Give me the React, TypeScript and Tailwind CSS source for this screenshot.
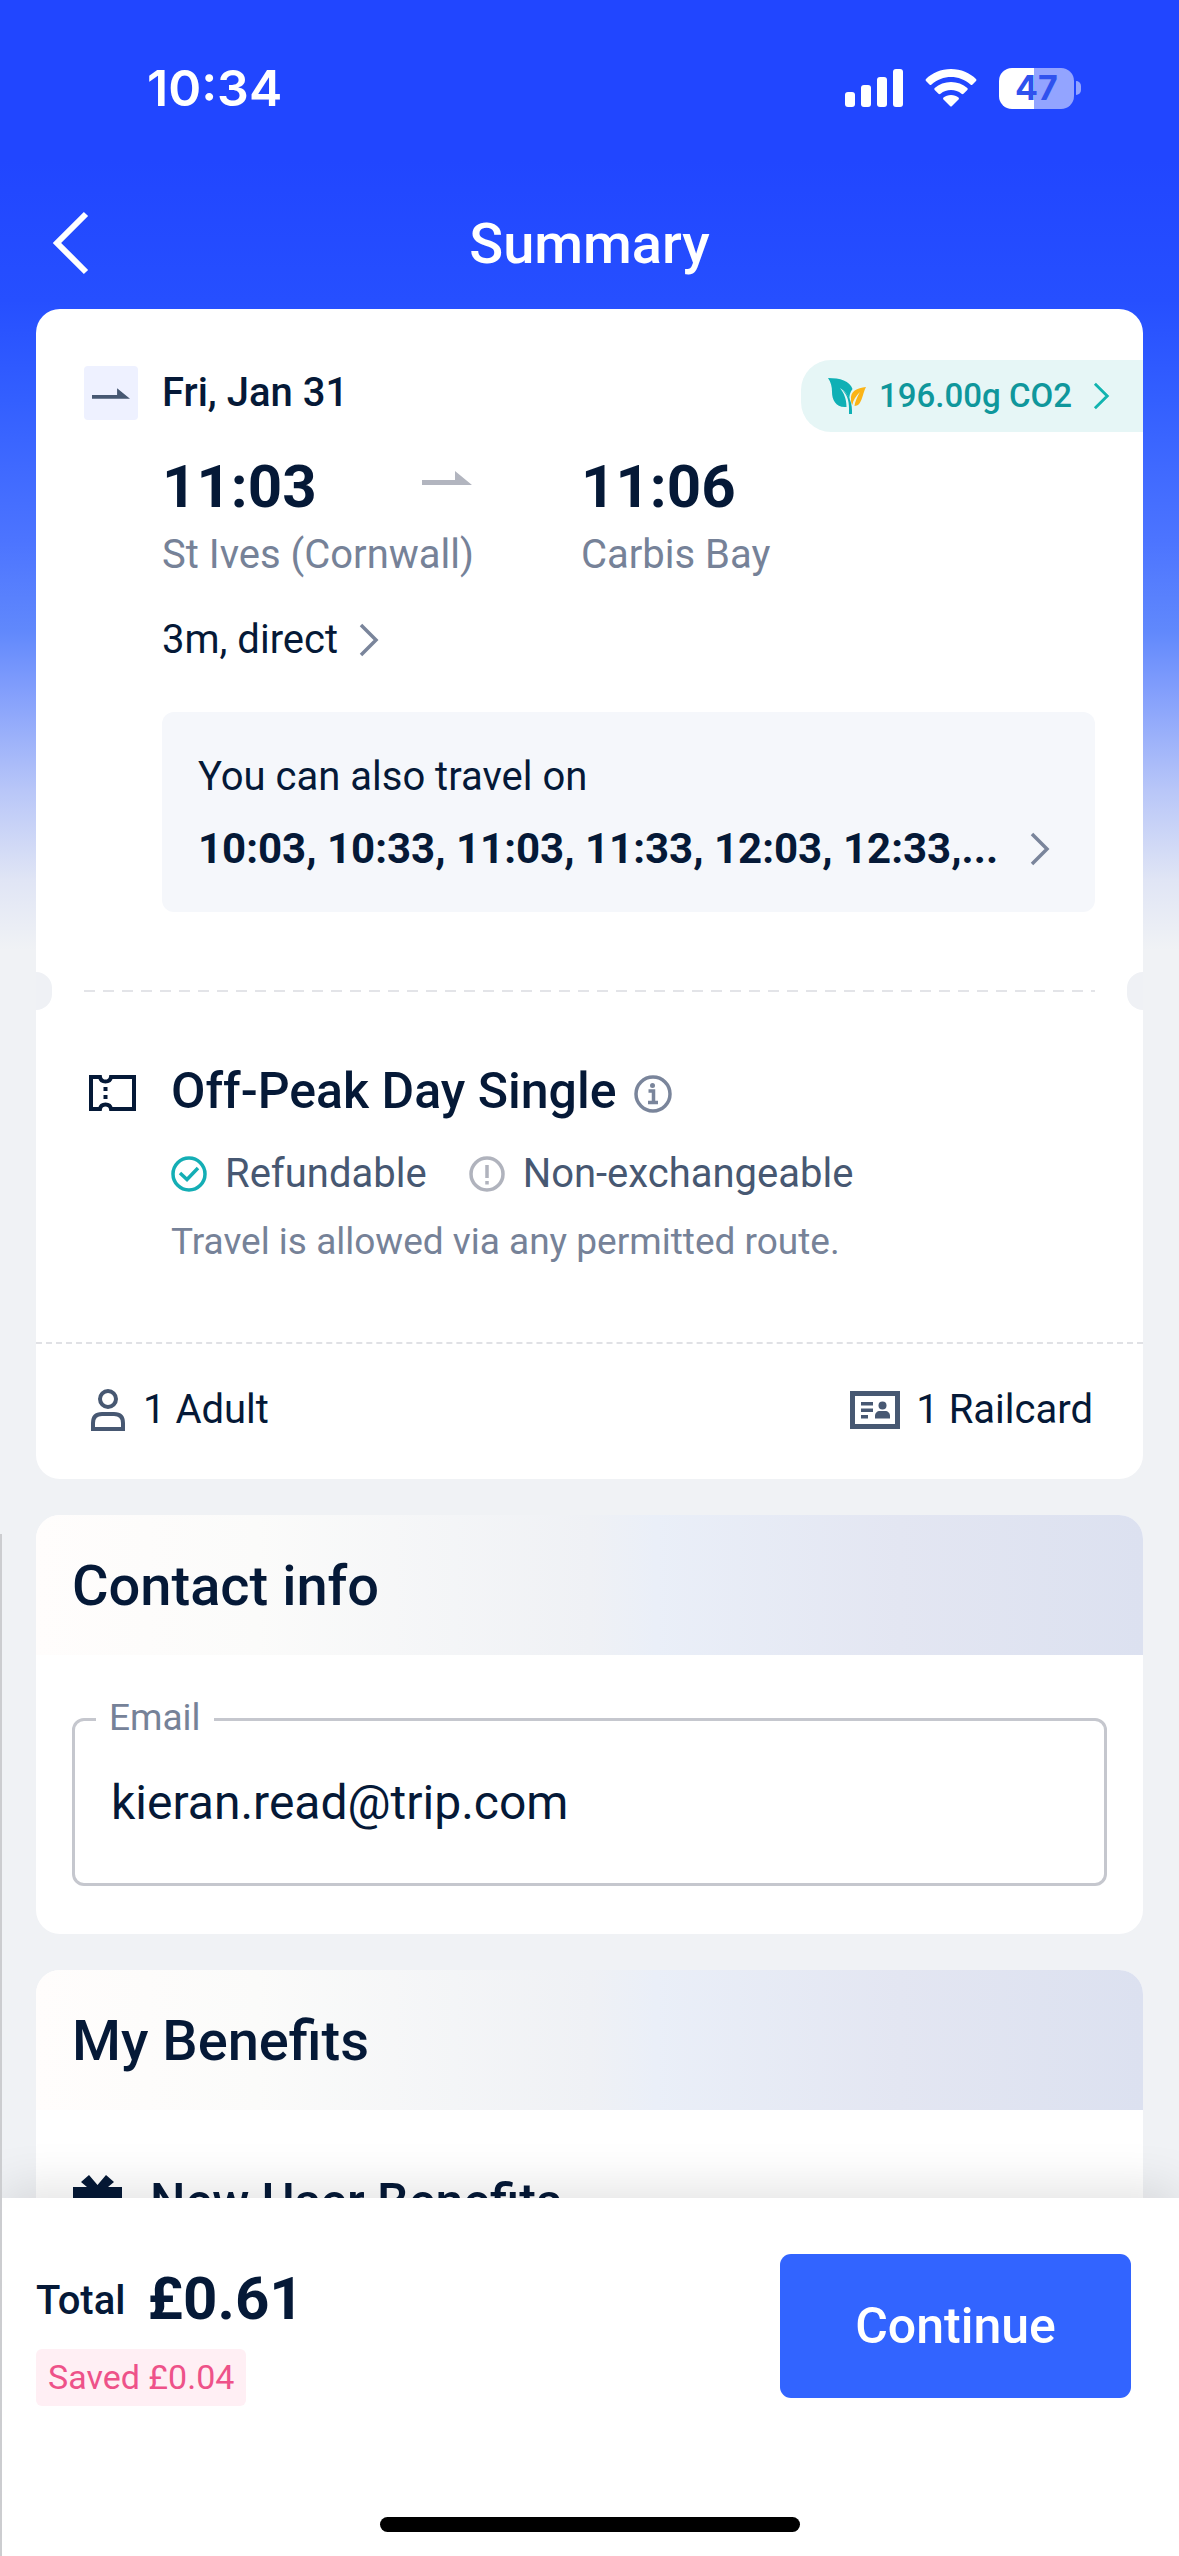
import type { ReactNode } from "react";

const times = ["10:03", "10:33", "11:03", "11:33", "12:03", "12:33"];

function ChevronRight({ className }: { className: string }) {
    return (
        <svg viewBox="0 0 20 34" className={className} fill="none" stroke="currentColor" strokeWidth="3.5">
            <path d="M2 2 L17 17 L2 32" />
        </svg>
    );
}

function HalfArrow({ className }: { className: string }) {
    return (
        <svg viewBox="0 0 50 14" className={className} fill="currentColor">
            <path d="M0 9 H33 V0 L50 14 H0 Z" />
        </svg>
    );
}

function StatusBar() {
    return (
        <div className="flex h-[176px] items-center justify-between pl-[147px] pr-[98px] text-white">
            <span className="font-['Inter',sans-serif] text-[50px] font-semibold leading-[60px]">10:34</span>
            <div className="flex items-center gap-[22px]">
                <svg viewBox="0 0 58 38" className="h-[38px] w-[58px]" fill="currentColor">
                    <rect x="0" y="23" width="10" height="15" rx="3" />
                    <rect x="16" y="16" width="10" height="22" rx="3" />
                    <rect x="32" y="8" width="10" height="30" rx="3" />
                    <rect x="48" y="0" width="10" height="38" rx="3" />
                </svg>
                <svg viewBox="0 0 52 38" className="h-[38px] w-[52px]" fill="currentColor">
                    <path d="M26 0 C36 0 45 4 51 10 Q52 11 51 12 L47.500 15.500 Q46.500 16.500 45.500 15.500 C40 10.500 33 8 26 8 C19 8 12 10.500 6.500 15.500 Q5.500 16.500 4.500 15.500 L1 12 Q0 11 1 10 C7 4 16 0 26 0 Z" />
                    <path d="M26 13 C32 13 38 15 42.300 19 Q43.300 20 42.300 21 L38.500 24.700 Q37.500 25.600 36.500 24.700 C33.500 22.300 30 21 26 21 C22 21 18.500 22.300 15.500 24.700 Q14.500 25.600 13.500 24.700 L9.700 21 Q8.700 20 9.700 19 C14 15 20 13 26 13 Z" />
                    <path d="M26 26 C29 26 31.500 27 33.500 28.600 Q34.500 29.500 33.500 30.500 L27 37 Q26 38 25 37 L18.500 30.500 Q17.500 29.500 18.500 28.600 C20.500 27 23 26 26 26 Z" />
                </svg>
                <div className="flex items-center gap-[2px]">
                    <div className="flex h-[41px] w-[75px] items-center justify-center rounded-[13px] bg-linear-to-r from-white from-47% to-[#93a4ff] to-47% font-['Inter',sans-serif] text-[34px] font-bold leading-[40px] text-[#2f52ee]">
                        47
                    </div>
                    <div className="h-[14px] w-[5px] rounded-r-full bg-[#93a4ff]" />
                </div>
            </div>
        </div>
    );
}

function TitleBar() {
    return (
        <div className="grid h-[133px] grid-cols-[1fr_auto_1fr] items-center text-white">
            <button aria-label="Back" className="ml-[52px] w-[38px]">
                <svg viewBox="0 0 38 64" className="h-[64px] w-[38px]" fill="none" stroke="currentColor" strokeWidth="6">
                    <path d="M34 3 L5 32 L34 61" />
                </svg>
            </button>
            <h1 className="pt-[2px] text-[56px] font-medium leading-[64px]">Summary</h1>
        </div>
    );
}

function Journey() {
    return (
        <div className="pl-[48px] pt-[51px]">
            <div className="flex items-start justify-between">
                <div className="mt-[6px] flex h-[54px] items-center gap-[24px]">
                    <div className="flex h-[54px] w-[54px] items-center justify-center rounded-[4px] bg-[#eef1ff] text-[#475872]">
                        <HalfArrow className="h-[11px] w-[38px]" />
                    </div>
                    <span className="text-[40px] font-medium leading-[52px]">Fri, Jan 31</span>
                </div>
                <button className="flex h-[72px] items-center rounded-l-[30px] bg-[#e6f6f6] pl-[27px] pr-[33px] text-[#0f979c]">
                    <svg viewBox="0 0 38 36" className="h-[36px] w-[38px]">
                        <path d="M0 0 C12 0 22 3 24.500 11 C22 14 21 18 21.500 22 C20 17 17 13 12 10 C16 15 18.500 21 18.500 29 C8 30 4 22 4 14 C4 9 3 4 0 0 Z" fill="#0fb0b5" />
                        <path d="M38 9 C29 10 22 13 23 22 C23 24 23.500 25.500 24.300 27 C25 22 28 18 32 14 C29 19 27 24 26.500 28 C34 28 34 17 38 9 Z" fill="#fbb417" />
                        <path d="M14 12 C20 17 21.500 24 21 36 H24 C24.500 26 22 17 14 12 Z" fill="#0fb0b5" />
                    </svg>
                    <span className="ml-[13px] text-[33px] font-medium leading-[40px]">196.00g CO2</span>
                    <ChevronRight className="ml-[21px] h-[28px] w-[17px] text-[#12b4b0]" />
                </button>
            </div>

            <div className="ml-[78px] mr-[48px]">
                <div className="mt-[17px] grid grid-cols-[312px_1fr] gap-x-[107px]">
                    <div>
                        <div className="flex items-center justify-between text-[60px] font-bold leading-[76px]">
                            11:03
                            <HalfArrow className="mb-[18px] mr-[2px] h-[14px] w-[50px] text-[#b2b5bf]" />
                        </div>
                        <div className="mt-[4px] whitespace-nowrap text-[40px] leading-[52px] text-[#768298]">St Ives (Cornwall)</div>
                    </div>
                    <div>
                        <div className="text-[60px] font-bold leading-[76px]">11:06</div>
                        <div className="mt-[4px] whitespace-nowrap text-[40px] leading-[52px] text-[#768298]">Carbis Bay</div>
                    </div>
                </div>

                <button className="mt-[33px] flex items-center gap-[21px] text-[40px] leading-[52px]">
                    3m, direct
                    <ChevronRight className="h-[34px] w-[20px] text-[#7a859b]" />
                </button>

                <button className="mt-[46px] block w-full rounded-[12px] bg-[#f5f7fb] pb-[35px] pl-[36px] pr-[45px] pt-[39px] text-left">
                    <span className="block text-[40px] leading-[52px]">You can also travel on</span>
                    <span className="mt-[18px] flex items-center justify-between text-[42px] font-bold leading-[56px]">
                        <span className="whitespace-nowrap">{times.join(", ")},...</span>
                        <ChevronRight className="h-[34px] w-[20px] shrink-0 text-[#7a859b]" />
                    </span>
                </button>
            </div>
        </div>
    );
}

// Tear line between the journey and the ticket, with a notch on both edges
function TearLine() {
    return (
        <div className="mt-[59px] flex h-[40px] items-center justify-between overflow-hidden">
            <div className="h-[38px] w-[16px] rounded-r-full bg-[#eff1f5]" />
            <div className="mx-[32px] h-[2px] flex-1 bg-[repeating-linear-gradient(90deg,#e3e4e8_0_11px,transparent_11px_19px)]" />
            <div className="h-[38px] w-[16px] rounded-l-full bg-[#eff1f5]" />
        </div>
    );
}

function Ticket() {
    return (
        <div className="flex gap-[35px] px-[53px] pb-[76px] pt-[48px]">
            <svg viewBox="0 0 47 36" className="mt-[16px] h-[36px] w-[47px] shrink-0" fill="none" stroke="currentColor" strokeWidth="4">
                <path d="M2 2 H11 C12 8 21 8 22 2 H45 V34 H22 C21 28 12 28 11 34 H2 Z" />
                <path d="M16.500 12 V16 M16.500 20 V24" />
            </svg>
            <div>
                <div className="flex items-center gap-[18px]">
                    <h2 className="text-[50px] font-medium leading-[64px]">Off-Peak Day Single</h2>
                    <button aria-label="Ticket details" className="mt-[6px]">
                        <svg viewBox="0 0 38 38" className="h-[38px] w-[38px]" fill="none" stroke="#7a859b" strokeWidth="3.500">
                            <circle cx="19" cy="19" r="17" />
                            <path d="M14.500 16 H19.500 V27 M14 27.500 H24" />
                            <circle cx="18.500" cy="10.500" r="2.500" fill="#7a859b" stroke="none" />
                        </svg>
                    </button>
                </div>
                <div className="mt-[25px] flex items-center text-[40px] leading-[52px] text-[#475872]">
                    <svg viewBox="0 0 36 36" className="h-[36px] w-[36px]" fill="none" stroke="#14aeb5" strokeWidth="3.500">
                        <circle cx="18" cy="18" r="16" />
                        <path d="M9 17 L16 23.500 L27 12" />
                    </svg>
                    <span className="ml-[18px]">Refundable</span>
                    <svg viewBox="0 0 36 36" className="ml-[42px] h-[36px] w-[36px]" fill="none" stroke="#b0b3bd" strokeWidth="3.500">
                        <circle cx="18" cy="18" r="16" />
                        <path d="M18 9 V22 M18 25 V28.500" />
                    </svg>
                    <span className="ml-[18px]">Non-exchangeable</span>
                </div>
                <p className="mt-[18px] text-[37px] leading-[48px] text-[#768298]">Travel is allowed via any permitted route.</p>
            </div>
        </div>
    );
}

function Passengers() {
    return (
        <div className="border-t-2 border-dashed border-[#e0e1e5] pb-[4px]">
            <div className="flex h-[131px] items-center justify-between px-[50px] text-[40px] leading-[52px]">
                <div className="flex items-center gap-[18px] pl-[5px]">
                    <svg viewBox="0 0 34 42" className="h-[42px] w-[34px]" fill="none" stroke="#475872" strokeWidth="4">
                        <ellipse cx="17" cy="10" rx="8" ry="8" />
                        <path d="M2 40 V34 C2 28 5 25 11 25 H23 C29 25 32 28 32 34 V40 Z" />
                    </svg>
                    <span>1 Adult</span>
                </div>
                <div className="flex items-center gap-[16px]">
                    <svg viewBox="0 0 50 38" className="h-[38px] w-[50px]" fill="#475872">
                        <path fillRule="evenodd" d="M0 0 H50 V38 H0 Z M5 5 V33 H45 V5 Z" />
                        <path d="M11 11 H23 V14.500 H11 Z M11 17.500 H23 V21 H11 Z M11 24 H18 V27.500 H11 Z" />
                        <circle cx="32.500" cy="14.500" r="4" />
                        <path d="M25 27.500 V25 C25 22 27 20 30 20 H35 C38 20 40 22 40 25 V27.500 Z" />
                    </svg>
                    <span>1 Railcard</span>
                </div>
            </div>
        </div>
    );
}

function Section({ title, children }: { title: string; children: ReactNode }) {
    return (
        <section className="mt-[36px] overflow-hidden rounded-[24px] bg-white">
            <h2 className="bg-[linear-gradient(90deg,#fffdfc,#fbfbfa_20%,#eff1f5_50%,#eaeff8_56%,#e3e6f2_78%,#dce1f0)] px-[36px] pt-[2px] text-[56px] font-medium leading-[138px]">
                {title}
            </h2>
            {children}
        </section>
    );
}

function BottomBar() {
    return (
        <footer className="relative bg-white pb-[24px] pt-[56px] shadow-[0_-8px_48px_rgba(0,0,0,0.12)]">
            <div className="flex items-start justify-between pl-[36px] pr-[48px]">
                <div className="flex flex-col items-start pt-[5px]">
                    <div className="flex items-center gap-[22px] leading-[76px]">
                        <span className="pt-[4px] text-[40px] font-medium">Total</span>
                        <span className="text-[60px] font-bold">£0.61</span>
                    </div>
                    <span className="mt-[10px] rounded-[6px] bg-[#ffeff4] px-[12px] text-[34px] leading-[57px] text-[#ee5289]">
                        Saved £0.04
                    </span>
                </div>
                <button className="h-[144px] w-[351px] rounded-[11px] bg-[#3264ff] text-[50px] font-medium text-white">
                    Continue
                </button>
            </div>
            <div className="mx-auto mt-[111px] h-[15px] w-[420px] rounded-full bg-black" />
        </footer>
    );
}

export default function App() {
    return (
        <div className="relative flex h-screen flex-col overflow-hidden bg-[#f0f2f6] bg-[linear-gradient(180deg,#2146ff_160px,#264fff_300px,#335fff_400px,#4c74ff_540px,#6088fc_630px,#7f9cfc_685px,#b8c6f8_790px,#e0e5f5_880px,#f0f2f5_950px)] font-['Roboto',sans-serif] text-[#051937]">
            <StatusBar />
            <TitleBar />
            <main className="min-h-0 flex-1 overflow-hidden px-[36px]">
                <section className="overflow-hidden rounded-[24px] bg-white">
                    <Journey />
                    <TearLine />
                    <Ticket />
                    <Passengers />
                </section>

                <Section title="Contact info">
                    <div className="px-[36px] pb-[48px] pt-[63px]">
                        <div className="relative">
                            <label htmlFor="email" className="absolute -top-[24px] left-[24px] bg-white px-[13px] text-[37px] leading-[48px] text-[#768298]">
                                Email
                            </label>
                            <input
                                id="email"
                                type="email"
                                defaultValue="kieran.read@trip.com"
                                className="h-[168px] w-full rounded-[12px] border-3 border-[#c5c7ce] px-[36px] text-[48px] leading-[64px]"
                            />
                        </div>
                    </div>
                </Section>

                <Section title="My Benefits">
                    <div className="flex items-center gap-[28px] px-[37px] pb-[60px] pt-[60px]">
                        <svg viewBox="0 0 49 54" className="h-[54px] w-[49px]" fill="currentColor">
                            <path d="M0 12 H14 L8 7 L16 0 L24.500 10 L33 0 L41 7 L35 12 H49 V26 H0 Z M4 30 H22 V54 H4 Z M27 30 H45 V54 H27 Z" />
                        </svg>
                        <span className="text-[50px] font-medium leading-[64px]">New User Benefits</span>
                    </div>
                </Section>
            </main>
            <BottomBar />
            <div className="absolute bottom-0 left-0 top-[60%] w-[2px] bg-[#cccdd0]" />
        </div>
    );
}
